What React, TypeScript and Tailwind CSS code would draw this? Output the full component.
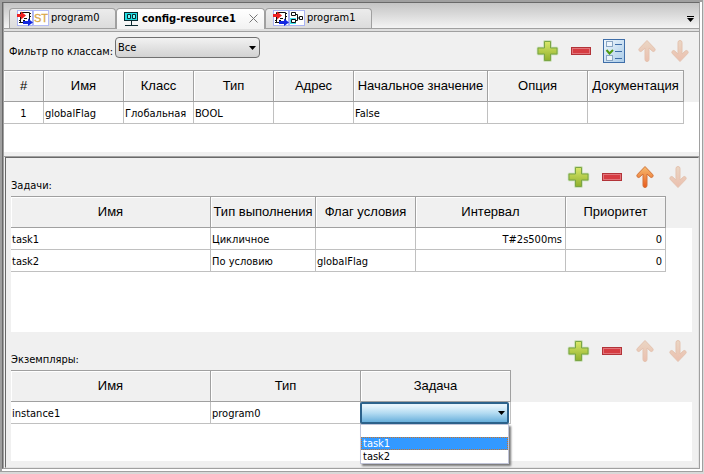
import React from "react";

type Align = "left" | "center" | "right";
type Column = { title: string; width: string; align?: Align };

const ALIGN: Record<Align, string> = {
  left: "pl-px text-left",
  center: "text-center",
  right: "pr-[3px] text-right",
};

function AddIcon() {
  return (
    <svg viewBox="0 0 24 24" className="size-6" aria-hidden="true">
      <defs>
        <linearGradient id="add-fill" x1="0" y1="0" x2="0" y2="1">
          <stop offset="0" stopColor="#d9e86a" />
          <stop offset="1" stopColor="#90b02c" />
        </linearGradient>
      </defs>
      <path d="M8.500 2.500h6v6.500h6.500v6h-6.500v6.500h-6v-6.500h-6.500v-6h6.500z" fill="none" stroke="#c3dcae" strokeWidth="2.500" strokeLinejoin="round" />
      <path d="M8.500 2.500h6v6.500h6.500v6h-6.500v6.500h-6v-6.500h-6.500v-6h6.500z" fill="url(#add-fill)" stroke="#7ba545" strokeLinejoin="round" />
    </svg>
  );
}

function RemoveIcon() {
  return (
    <svg viewBox="0 0 24 24" className="size-6" aria-hidden="true">
      <rect x="2.500" y="8.500" width="19" height="7" fill="#d63c42" stroke="#b23338" />
      <rect x="3.500" y="9.500" width="17" height="5" fill="none" stroke="#e2747a" />
    </svg>
  );
}

function ChecklistIcon() {
  return (
    <svg viewBox="0 0 24 24" className="size-6" aria-hidden="true">
      <defs>
        <linearGradient id="list-fill" x1="0" y1="0" x2="1" y2="1">
          <stop offset="0" stopColor="#f2f8fd" />
          <stop offset="1" stopColor="#a9cbe8" />
        </linearGradient>
      </defs>
      <rect x="1.500" y="0.500" width="21" height="23" fill="url(#list-fill)" stroke="#3f6ea8" />
      <rect x="4.500" y="2.500" width="6" height="5" fill="#eef5fb" stroke="#8ba6c4" />
      <rect x="4.500" y="16.500" width="6" height="5" fill="#eef5fb" stroke="#8ba6c4" />
      <path d="M13 5.500h7M13 12.500h7M13 19.500h7" stroke="#3f6ea8" />
      <path d="M4.500 11l3 3.500 3.500-3.500" fill="none" stroke="#4f9a10" strokeWidth="2" />
    </svg>
  );
}

function ArrowIcon({ down = false, active = false }: { down?: boolean; active?: boolean }) {
  const id = `arrow-${down ? "down" : "up"}-${active ? "on" : "off"}`;
  return (
    <svg viewBox="0 0 24 24" className="size-6" aria-hidden="true">
      <defs>
        <linearGradient id={id} x1="0" y1="0" x2="0" y2="1">
          <stop offset="0" stopColor={active ? "#f6bd70" : "#ead6c4"} />
          <stop offset="1" stopColor={active ? "#ea5a1c" : "#ebbfae"} />
        </linearGradient>
      </defs>
      <path
        d={
          down
            ? "M10 3.500q0-2 2-2t2 2v11.500l3.500-3.200q1.300-.8 2.300.4.900 1.300-.3 2.500l-7.500 7.800-7.500-7.800q-1.200-1.200-.3-2.500 1-1.200 2.300-.4l3.500 3.200z"
            : "M10 20.500q0 2 2 2t2-2v-11.500l3.500 3.200q1.300.8 2.300-.4.900-1.300-.3-2.500l-7.500-7.800-7.500 7.800q-1.200 1.200-.3 2.500 1 1.200 2.300.4l3.500-3.200z"
        }
        fill={`url(#${id})`}
        stroke={active ? "#d2733a" : "#e4c3b0"}
        strokeLinejoin="round"
      />
    </svg>
  );
}

function ProgramIcon() {
  return (
    <svg viewBox="0 0 16 16" className="size-4 shrink-0" aria-hidden="true">
      <rect x="0.500" y="0.500" width="15" height="15" fill="#fff" stroke="#aab4f4" />
      <path d="M3.500 2.500h9v10h-9z" fill="#fff" stroke="#111" />
      <path d="M2 10.500h2M2 12.500h2M12 3.500h2M12 6.500h2M7 8.500h3M6 10.500h2" stroke="#111" />
      <path d="M0 4h4V1.500L9 5.500 4 9.500V7H0z" fill="#ee2020" />
      <path d="M6 11h5V8.500l5 4-5 3.500v-2H6z" fill="#1428e0" />
    </svg>
  );
}

function StIcon() {
  return (
    <svg viewBox="0 0 16 16" className="size-4 shrink-0" aria-hidden="true">
      <rect x="0.500" y="0.500" width="15" height="15" fill="#fff" stroke="#b4bcf6" />
      <text x="8" y="12" textAnchor="middle" fontSize="11" fontFamily="Liberation Sans, sans-serif" fill="#d9a84a" stroke="#d9a84a" strokeWidth="0.300">
        ST
      </text>
    </svg>
  );
}

function FbdIcon() {
  return (
    <svg viewBox="0 0 16 16" className="size-4 shrink-0" aria-hidden="true">
      <rect x="0.500" y="0.500" width="15" height="15" fill="#fff" stroke="#aab4f4" />
      <path d="M1 8h6v6H1z" fill="#3ee4f0" />
      <path d="M2.500 2.500h4v3h-4zM2.500 9.500h4v3h-4zM10.500 6.500h3v3h-3z" fill="#fff" stroke="#111" />
      <path d="M6.500 4.500h2v6h-2M8.500 8h2" fill="none" stroke="#111" />
    </svg>
  );
}

function ResourceIcon() {
  return (
    <svg viewBox="0 0 16 16" className="size-4 shrink-0" aria-hidden="true">
      <rect x="1.500" y="1.500" width="13" height="8" fill="#20e0e6" stroke="#0b2a30" />
      <path d="M4.500 3.500h3v4h-3zM9.500 3.500h3v4h-3z" fill="#7ff" stroke="#0b2a30" />
      <path d="M8.500 10v4M2 14.500h13" stroke="#0b2a30" />
    </svg>
  );
}

function Caret() {
  return (
    <svg viewBox="0 0 7 4" className="pointer-events-none absolute top-1/2 right-1 h-1 w-[7px] -translate-y-1/2" aria-hidden="true">
      <path d="M0 0h7L3.500 4z" fill="#000" />
    </svg>
  );
}

function Toolbar({ checklist = false, upActive = false }: { checklist?: boolean; upActive?: boolean }) {
  return (
    <div className="ml-auto flex items-center gap-[9px]">
      <button type="button" aria-label="Добавить"><AddIcon /></button>
      <button type="button" aria-label="Удалить"><RemoveIcon /></button>
      {checklist && <button type="button" aria-label="Список"><ChecklistIcon /></button>}
      <button type="button" aria-label="Вверх" disabled={!upActive}><ArrowIcon active={upActive} /></button>
      <button type="button" aria-label="Вниз" disabled><ArrowIcon down /></button>
    </div>
  );
}

function Grid({ label, columns, rows }: { label: string; columns: Column[]; rows: React.ReactNode[][] }) {
  return (
    <table aria-label={label} className="w-full table-fixed border-separate border-spacing-0">
      <colgroup>
        {columns.map((c) => (
          <col key={c.title} className={c.width} />
        ))}
        <col />
      </colgroup>
      <thead>
        <tr className="h-8">
          {columns.map((c) => (
            <th
              key={c.title}
              scope="col"
              className="border-y border-r border-[#a0a0a0] bg-[#f0f0f0] p-0 font-['Liberation_Sans',Arial,sans-serif] text-[13px] font-normal whitespace-nowrap shadow-[inset_1px_1px_0_#fff]"
            >
              {c.title}
            </th>
          ))}
          <td className="bg-[#f0f0f0] p-0" />
        </tr>
      </thead>
      <tbody>
        {rows.map((row, r) => (
          <tr key={r} className="h-[22px]">
            {row.map((cell, i) => (
              <td key={i} className={`relative border-r border-b border-[#c0c0c0] pt-0.5 whitespace-nowrap ${ALIGN[columns[i].align ?? "left"]}`}>
                {cell}
              </td>
            ))}
            <td className="p-0" />
          </tr>
        ))}
      </tbody>
    </table>
  );
}

const VARIABLES: Column[] = [
  { title: "#", width: "w-10", align: "center" },
  { title: "Имя", width: "w-20" },
  { title: "Класс", width: "w-[70px]" },
  { title: "Тип", width: "w-20" },
  { title: "Адрес", width: "w-20" },
  { title: "Начальное значение", width: "w-[134px]" },
  { title: "Опция", width: "w-[100px]" },
  { title: "Документация", width: "w-24" },
];

const TASKS: Column[] = [
  { title: "Имя", width: "w-[200px]" },
  { title: "Тип выполнения", width: "w-[105px]" },
  { title: "Флаг условия", width: "w-[100px]" },
  { title: "Интервал", width: "w-[150px]", align: "right" },
  { title: "Приоритет", width: "w-[100px]", align: "right" },
];

const INSTANCES: Column[] = [
  { title: "Имя", width: "w-[200px]" },
  { title: "Тип", width: "w-[150px]" },
  { title: "Задача", width: "w-[150px]" },
];

function TaskPicker() {
  return (
    <div className="absolute top-0 -left-px h-[22px] w-[149px]">
      <select
        aria-label="Задача"
        defaultValue=""
        className="h-full w-full appearance-none rounded-xs border-2 border-[#2c628b] bg-linear-to-b from-[#e6f4fc] from-10% via-[#b4dcf2] via-50% to-[#68b0dc] px-1"
      >
        <option value=""></option>
        <option>task1</option>
        <option>task2</option>
      </select>
      <Caret />
      <ul className="absolute top-[22px] left-0 w-[149px] border border-[#c0c4d8] bg-white pt-3 leading-[13px] shadow-[2px_2px_2px_#777]">
        <li className="border border-dotted border-[#c8742a] bg-[#3399ff] pl-px leading-[11px] text-white">task1</li>
        <li className="pl-0.5">task2</li>
      </ul>
    </div>
  );
}

export default function App() {
  return (
    <div className="flex min-h-screen flex-col bg-[#d9d9d9] pr-px pb-0.5 font-['DejaVu_Sans_Condensed','DejaVu_Sans',sans-serif] text-[11px] leading-4 text-black">
      <div className="flex flex-1 flex-col border-t-2 border-r border-b border-l-2 border-[#a0a0a0] bg-white pr-0.5 pb-0.5">
        <div className="flex flex-1 flex-col border border-[#a0a0a0] border-t-[#696969] border-l-[#696969] bg-[#f0f0f0]">
          <div className="flex flex-1 flex-col border-l border-[#a0a0a0]">
            <nav className="flex h-[26px] items-end border-b border-[#a0a0a0] bg-linear-to-b from-[#c4c4c4] to-[#f4f4f4] pl-[5px]">
              <button type="button" className="flex h-5 w-[107px] items-center rounded-t-sm border border-b-0 border-[#a0a0a0] bg-linear-to-b from-[#ececec] to-[#dcdcdc] pb-px pl-[7px]">
                <ProgramIcon />
                <StIcon />
                <span className="pl-0.5">program0</span>
              </button>
              <div className="-mb-1 flex h-6 w-[149px] items-center rounded-t-sm border border-b-0 border-[#a0a0a0] bg-linear-to-b from-white to-[#f0f0f0] px-1.5 pb-1">
                <button type="button" className="flex items-center font-bold">
                  <ResourceIcon />
                  <span className="pl-[3px]">config-resource1</span>
                </button>
                <button type="button" aria-label="Закрыть" className="ml-auto">
                  <svg viewBox="0 0 9 9" className="size-[9px]" aria-hidden="true">
                    <path d="M.5.5l8 8M8.500.5l-8 8" stroke="#777" />
                  </svg>
                </button>
              </div>
              <button type="button" className="flex h-5 w-[107px] items-center rounded-t-sm border border-b-0 border-[#a0a0a0] bg-linear-to-b from-[#ececec] to-[#dcdcdc] pb-px pl-[7px]">
                <ProgramIcon />
                <FbdIcon />
                <span className="pl-0.5">program1</span>
              </button>
              <button type="button" aria-label="Список вкладок" className="mr-[5px] mb-1.5 ml-auto">
                <svg viewBox="0 0 7 6" className="h-1.5 w-[7px]" aria-hidden="true">
                  <path d="M0 0h7v1H0zM0 2h7L3.500 6z" fill="#000" />
                </svg>
              </button>
            </nav>
            <div className="h-[3px] border-b border-[#a0a0a0] bg-[#e0e0e0]" />

            <section>
              <div className="flex h-[38px] items-center pr-[7px] pl-[5px]">
                <label htmlFor="class-filter" className="w-[106px] pt-0.5 whitespace-nowrap">Фильтр по классам:</label>
                <div className="relative mb-[7px] h-[21px] w-[145px]">
                  <select
                    id="class-filter"
                    className="h-full w-full appearance-none rounded-sm border border-[#707070] bg-linear-to-b from-[#f2f2f2] to-[#d2d2d2] px-0.5"
                  >
                    <option>Все</option>
                  </select>
                  <Caret />
                </div>
                <Toolbar checklist />
              </div>
              <div className="min-h-[82px] bg-white">
                <Grid
                  label="Переменные"
                  columns={VARIABLES}
                  rows={[["1", "globalFlag", "Глобальная", "BOOL", "", "False", "", ""]]}
                />
              </div>
            </section>

            <div className="mt-1 flex flex-1 flex-col border-t border-[#a0a0a0] pl-px">
              <div className="flex-1 border border-[#e3e3e3] border-t-[#696969] border-l-[#696969] pr-1.5 pb-1 pl-[5px]">
                <section>
                  <div className="flex h-[38px] items-center pr-0.5">
                    <h2 className="mt-4 pt-0.5">Задачи:</h2>
                    <Toolbar upActive />
                  </div>
                  <div className="min-h-[136px] bg-white">
                    <Grid
                      label="Задачи"
                      columns={TASKS}
                      rows={[
                        ["task1", "Цикличное", "", "T#2s500ms", "0"],
                        ["task2", "По условию", "globalFlag", "", "0"],
                      ]}
                    />
                  </div>
                </section>
                <section>
                  <div className="flex h-[38px] items-center pr-0.5">
                    <h2 className="mt-4 pt-0.5">Экземпляры:</h2>
                    <Toolbar />
                  </div>
                  <div className="min-h-[91px] bg-white">
                    <Grid
                      label="Экземпляры"
                      columns={INSTANCES}
                      rows={[["instance1", "program0", <TaskPicker key="task" />]]}
                    />
                  </div>
                </section>
              </div>
            </div>
          </div>
        </div>
      </div>
    </div>
  );
}
